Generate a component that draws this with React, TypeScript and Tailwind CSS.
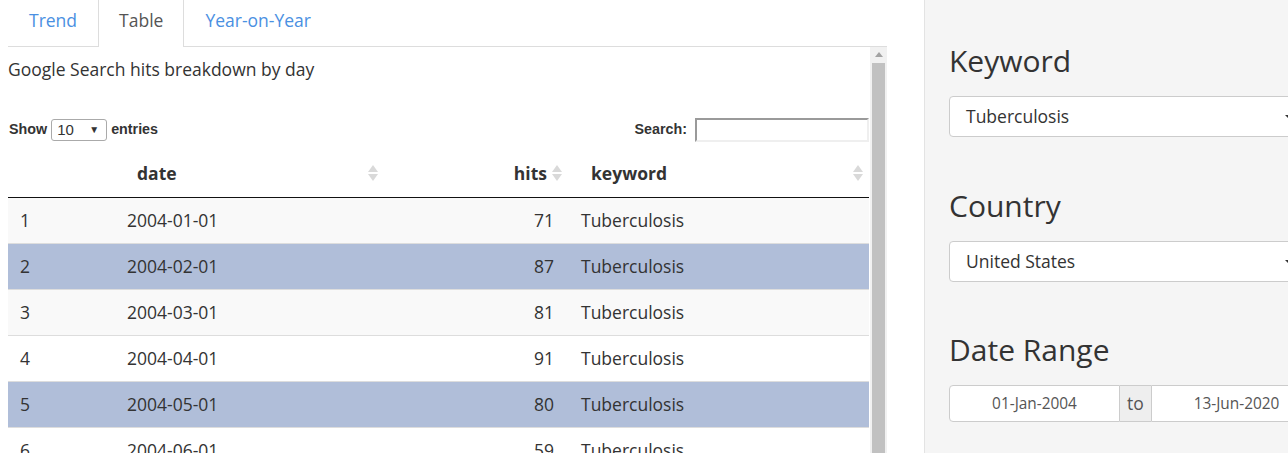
import React from "react";

const rows: [number, string, number][] = [
  [1, "2004-01-01", 71],
  [2, "2004-02-01", 87],
  [3, "2004-03-01", 81],
  [4, "2004-04-01", 91],
  [5, "2004-05-01", 80],
  [6, "2004-06-01", 59],
  [7, "2004-07-01", 62],
];
const selected = new Set([2, 5]);

function SortIcon() {
  return (
    <svg width="10" height="18" viewBox="0 0 10 18" className="shrink-0">
      <polygon points="0,8 5,1 10,8" fill="#d9d9d9" />
      <polygon points="0,10 10,10 5,17" fill="#d9d9d9" />
    </svg>
  );
}

export default function App() {
  return (
    <div
      className="flex h-[453px] w-[1288px] overflow-hidden bg-white text-[#333]"
      style={{ fontFamily: '"Open Sans", "Noto Sans", sans-serif' }}
    >
      {/* Main */}
      <div className="w-[924px] shrink-0 pl-[8px]">
        <div className="w-[879px]">
          {/* Tabs */}
          <div className="flex h-[47px] border-b border-[#ddd] text-[17.5px]">
            <div className="h-[47px] self-start border-x border-transparent px-5 pt-[8px] leading-[25px] text-[#4a90e2]">
              Trend
            </div>
            <div className="-mb-px h-[47px] self-start border-x border-[#ddd] bg-white px-5 pt-[8px] leading-[25px] text-[#555]">
              Table
            </div>
            <div className="h-[47px] self-start border-x border-transparent px-5 pt-[8px] leading-[25px] text-[#4a90e2]">
              Year-on-Year
            </div>
          </div>

          {/* Scroll area */}
          <div className="flex h-[406px]">
            <div className="w-[862px] overflow-hidden">
              <p className="mt-[10px] text-[17.5px] leading-[25px]">
                Google Search hits breakdown by day
              </p>

              {/* Controls */}
              <div
                className="mt-[36px] flex h-[24px] w-[861px] items-center text-[14.3px] font-bold text-[#333]"
                style={{ fontFamily: '"Liberation Sans", Arial, sans-serif' }}
              >
                <span className="pl-[1px]">Show</span>
                <div className="ml-[4px] flex h-[22px] w-[56px] items-center justify-between rounded-[3px] border border-[#aaa] bg-white pl-[5px] pr-[7px] text-[15px] font-normal">
                  <span>10</span>
                  <span className="text-[10px] leading-none">▼</span>
                </div>
                <span className="ml-[4px]">entries</span>
                <span className="ml-auto">Search:</span>
                <div className="ml-[8px] h-[24px] w-[174px] border-2 border-b-[#efefef] border-l-[#9a9a9a] border-r-[#efefef] border-t-[#9a9a9a] bg-white" />
              </div>

              {/* Table */}
              <div className="mt-[8px] w-[861px] text-[17.5px]">
                <div className="grid h-[48px] grid-cols-[109px_266px_188px_298px] items-center border-b border-[#111] pb-[1px] font-bold">
                  <div />
                  <div className="flex items-center justify-between pl-[20px] pr-[5px]">
                    <span>date</span>
                    <SortIcon />
                  </div>
                  <div className="flex items-center justify-end gap-[5px] pr-[9px]">
                    <span>hits</span>
                    <SortIcon />
                  </div>
                  <div className="flex items-center justify-between pl-[20px] pr-[6px]">
                    <span>keyword</span>
                    <SortIcon />
                  </div>
                </div>
                {rows.map(([i, d, h]) => {
                  const bg = selected.has(i)
                    ? "bg-[#b0bed9]"
                    : i % 2 === 1
                    ? "bg-[#f9f9f9]"
                    : "bg-white";
                  return (
                    <div
                      key={i}
                      className={`grid h-[46px] grid-cols-[109px_266px_188px_298px] items-center border-b border-[#ddd] ${bg}`}
                    >
                      <div className="pl-[12px]">{i}</div>
                      <div className="pl-[10px]">{d}</div>
                      <div className="pr-[17px] text-right">{h}</div>
                      <div className="pl-[10px]">Tuberculosis</div>
                    </div>
                  );
                })}
              </div>
            </div>

            {/* Scrollbar */}
            <div className="flex w-[17px] flex-col items-center bg-[#f1f1f1]">
              <div className="flex h-[16px] w-full items-center justify-center">
                <svg width="8" height="5" viewBox="0 0 8 5">
                  <polygon points="0,5 4,0 8,5" fill="#a3a3a3" />
                </svg>
              </div>
              <div className="h-[400px] w-[13px] bg-[#c1c1c1]" />
            </div>
          </div>
        </div>
      </div>

      {/* Sidebar */}
      <div className="h-full w-[364px] shrink-0 overflow-hidden border-l border-[#e3e3e3] bg-[#f5f5f5] pl-[24px] pt-[44px]">
        <div className="h-[33px] text-[30px] leading-[33px] text-[#333]">Keyword</div>
        <div className="mt-[19px] flex h-[41px] w-[352px] items-center justify-between rounded-[4px] border border-[#ccc] bg-white pl-[16px] pr-[7px] text-[17.5px] text-[#333]">
          <span>Tuberculosis</span>
          <svg width="8" height="4" viewBox="0 0 8 4">
            <polygon points="0,0 8,0 4,4" fill="#333" />
          </svg>
        </div>

        <div className="mt-[52px] h-[33px] text-[30px] leading-[33px] text-[#333]">Country</div>
        <div className="mt-[19px] flex h-[41px] w-[352px] items-center justify-between rounded-[4px] border border-[#ccc] bg-white pl-[16px] pr-[7px] text-[17.5px] text-[#333]">
          <span>United States</span>
          <svg width="8" height="4" viewBox="0 0 8 4">
            <polygon points="0,0 8,0 4,4" fill="#333" />
          </svg>
        </div>

        <div className="mt-[51px] h-[33px] text-[30px] leading-[33px] text-[#333]">Date Range</div>
        <div className="mt-[19px] flex h-[37px] w-[373px]">
          <div className="flex w-[171px] items-center justify-center rounded-l-[4px] border border-[#ccc] bg-white text-[15.4px] text-[#555]">
            01-Jan-2004
          </div>
          <div className="flex w-[31px] items-center justify-center border-y border-[#ccc] bg-[#eee] text-[17.5px] text-[#555]">
            to
          </div>
          <div className="flex w-[171px] items-center justify-center rounded-r-[4px] border border-[#ccc] bg-white text-[15.4px] text-[#555]">
            13-Jun-2020
          </div>
        </div>
      </div>
    </div>
  );
}
